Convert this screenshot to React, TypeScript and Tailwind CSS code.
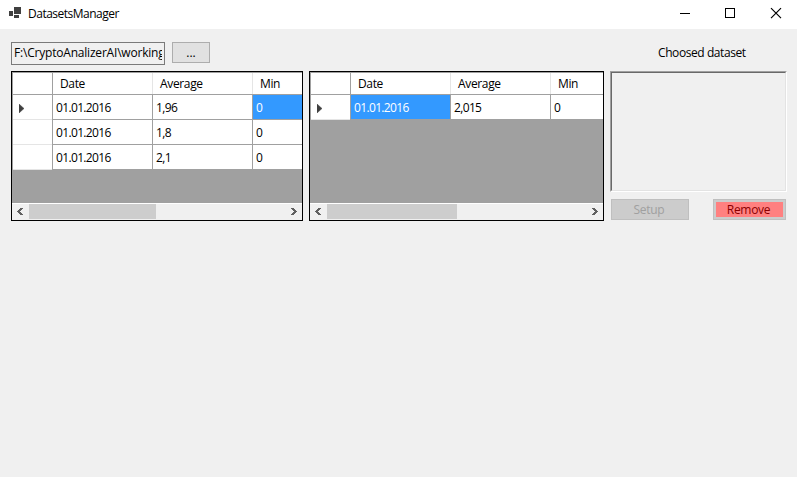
import React from "react";

type Row = { cells: string[]; selected?: number; current?: boolean };

function Arrow({ right = false }: { right?: boolean }) {
  return (
    <svg width="17" height="16" viewBox="0 0 17 16" shapeRendering="crispEdges" className={right ? "shrink-0 -scale-x-100" : "shrink-0"}>
      <path
        fill="#606060"
        d="M8 4h3v1H8zM7 5h3v1H7zM6 6h3v1H6zM5 7h3v1H5zM6 8h3v1H6zM7 9h3v1H7zM8 10h3v1H8z"
      />
    </svg>
  );
}

function DataGrid({ rows, width, thumb }: { rows: Row[]; width: string; thumb: string }) {
  const heads = ["Date", "Average", "Min"];
  const colWidth = (i: number) => (i < 2 ? "w-[100px] shrink-0 border-r" : "min-w-0 flex-1");
  return (
    <div className={`flex h-[150px] shrink-0 flex-col overflow-hidden border border-black bg-[#a0a0a0] ${width}`}>
      <div className="flex h-[23px] shrink-0 border-b border-l border-t border-[#a0a0a0] bg-white">
        <div className="w-10 shrink-0 border-r border-[#a0a0a0]" />
        {heads.map((h, i) => (
          <div key={h} className={`flex pl-[7px] pt-px leading-5 border-[#e5e5e5] tracking-[-0.35px] ${colWidth(i)}`}>
            {h}
          </div>
        ))}
      </div>
      {rows.map((r, n) => (
        <div key={n} className="flex h-[25px] shrink-0 border-l border-[#a0a0a0] bg-white">
          <div className="flex w-10 shrink-0 items-center border-r border-[#a0a0a0]">
            <div className="flex h-[25px] w-full items-center border-b border-[#e5e5e5]">
              {r.current && (
                <svg width="5" height="9" viewBox="0 0 5 9" className="ml-1.5 mt-[3px]">
                  <path d="M0 0L5 4.5L0 9Z" fill="#404040" stroke="#404040" strokeWidth="0.5" />
                </svg>
              )}
            </div>
          </div>
          {r.cells.map((c, i) => (
            <div
              key={i}
              className={`border-b border-[#a0a0a0] pl-[3px] pt-px leading-[24px] tracking-[-0.65px] ${colWidth(i)} ${
                r.selected === i ? "bg-[#3399ff] text-white" : ""
              }`}
            >
              {c}
            </div>
          ))}
        </div>
      ))}
      <div className="mt-auto flex h-[17px] shrink-0 border-t border-white bg-[#f0f0f0]">
        <Arrow />
        <div className={`h-[15px] bg-[#cdcdcd] ${thumb}`} />
        <div className="ml-auto flex">
          <Arrow right />
        </div>
      </div>
    </div>
  );
}

export default function App() {
  return (
    <div className="flex h-[477px] w-[797px] flex-col overflow-hidden bg-[#f0f0f0] font-['Open_Sans','Noto_Sans',sans-serif] text-[12px] text-black">
      <header className="flex h-[29px] shrink-0 items-start bg-white">
        <svg width="12" height="11" viewBox="0 0 12 11" shapeRendering="crispEdges" className="ml-[9px] mt-[7px]">
          <path fill="#404040" d="M5 0h7v7H5zM0 4h4v5H0zM5 8h5v3H5z" />
        </svg>
        <span className="ml-[7px] mt-[5px] leading-[18px] tracking-[-0.5px]">DatasetsManager</span>
        <div className="ml-auto flex">
          <svg width="126" height="29" viewBox="0 0 126 29" fill="none" stroke="black">
            <path d="M9 13.5h10M54.5 8.5h9v9h-9z" shapeRendering="crispEdges" />
            <path d="M100 8.2l10 10M110 8.2l-10 10" strokeWidth="1.2" />
          </svg>
        </div>
      </header>
      <main className="flex pl-[11px] pt-[13px]">
        <div className="flex flex-col">
          <div className="flex h-[29px] items-start">
            <div className="h-[23px] w-[154px] border border-[#7a7a7a] px-[2px]">
              <div className="overflow-hidden whitespace-nowrap leading-[20px] tracking-[-0.2px]">F:\CryptoAnalizerAI\working</div>
            </div>
            <button className="ml-[7px] h-[21px] w-[38px] border border-[#adadad] bg-[#e1e1e1] leading-[18px]">...</button>
          </div>
          <div className="flex gap-1.5">
            <DataGrid
              width="w-[292px]"
              thumb="w-[127px]"
              rows={[
                { cells: ["01.01.2016", "1,96", "0"], selected: 2, current: true },
                { cells: ["01.01.2016", "1,8", "0"] },
                { cells: ["01.01.2016", "2,1", "0"] },
              ]}
            />
            <DataGrid
              width="w-[295px]"
              thumb="w-[130px]"
              rows={[{ cells: ["01.01.2016", "2,015", "0"], selected: 0, current: true }]}
            />
          </div>
        </div>
        <div className="ml-1.5 flex w-[177px] flex-col">
          <div className="h-[29px] pl-[48px] pt-[2px] leading-[18px] tracking-[-0.42px]">Choosed dataset</div>
          <div className="h-[121px] border border-b-white border-l-[#a0a0a0] border-r-white border-t-[#a0a0a0]">
            <div className="h-full border border-b-[#e3e3e3] border-l-[#696969] border-r-[#e3e3e3] border-t-[#696969]" />
          </div>
          <div className="mt-[7px] flex justify-between pl-px pr-px">
            <button className="h-[21px] w-[78px] border border-[#bfbfbf] bg-[#cccccc] pr-[2px] leading-[19px] tracking-[-0.3px] text-[#a0a0a0]">Setup</button>
            <button className="h-[21px] w-[73px] border border-[#bfbfbf] bg-[#cccccc] p-[2px] text-[#8b0000]">
              <div className="h-[15px] bg-[#ff8080] pr-[2px] leading-[15px] tracking-[-0.3px]">Remove</div>
            </button>
          </div>
        </div>
      </main>
    </div>
  );
}
